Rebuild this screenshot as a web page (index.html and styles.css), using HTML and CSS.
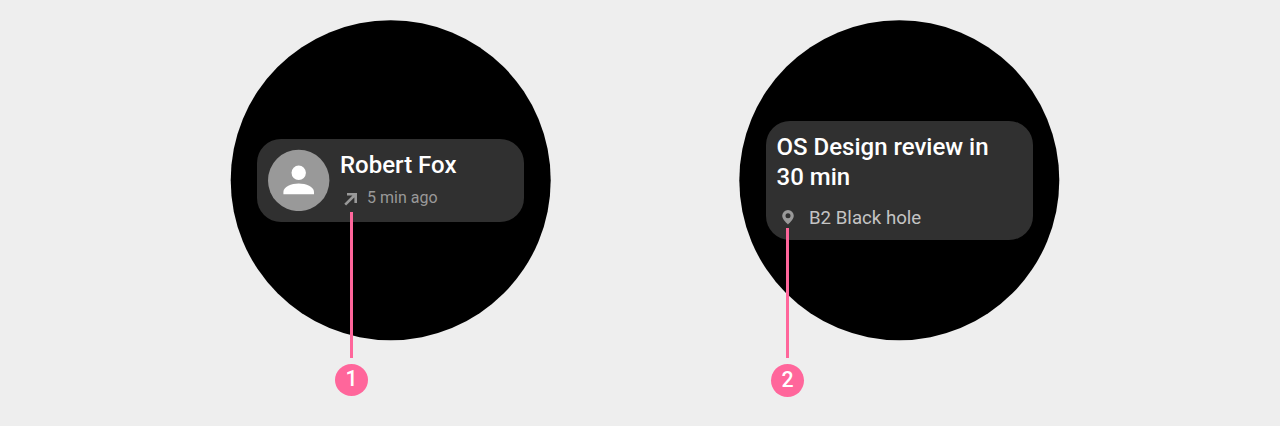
FILE: index.html
```html
<!DOCTYPE html>
<html lang="en">
<head>
<meta charset="utf-8">
<title>Watch cards</title>
<link rel="stylesheet" href="styles.css">
</head>
<body>
<main class="stage">
  <section class="watch">
    <svg class="disc" viewBox="0 0 322 322"><circle cx="160.700" cy="161.200" r="160"/></svg>
    <article class="card contact">
      <svg class="avatar" viewBox="0 0 62 62"><circle cx="30.700" cy="31.400" r="30.700" fill="#999"/><circle cx="30.700" cy="23.800" r="7.200" fill="#fff"/><path d="M15.400 45.200v-2.200c0-5.300 8-8.500 15.300-8.500s15.300 3.200 15.300 8.500v2.200z" fill="#fff"/></svg>
      <div class="info">
        <h2 class="name">Robert Fox</h2>
        <p class="meta"><svg class="arrow" viewBox="0 0 14 14"><path d="M3 2.200H11.700V11M11.400 2.500L1.200 12.700" fill="none" stroke="#999" stroke-width="2.600"/></svg><span>5 min ago</span></p>
      </div>
    </article>
    <div class="callout callout-one"><span class="line"></span><span class="number">1</span></div>
  </section>
  <section class="watch">
    <svg class="disc" viewBox="0 0 322 322"><circle cx="161.300" cy="161.200" r="160"/></svg>
    <article class="card event">
      <h2 class="title">OS Design review in<br>30 min</h2>
      <p class="place"><svg class="pin" viewBox="0 0 12 15"><path fill-rule="evenodd" d="M6 0a5.800 5.800 0 0 0-5.800 5.800C.2 9.500 6 14.500 6 14.500s5.800-5 5.800-8.700A5.800 5.800 0 0 0 6 0zm0 3.300a2.500 2.500 0 1 1 0 5 2.500 2.500 0 0 1 0-5z" fill="#999"/></svg><span>B2 Black hole</span></p>
    </article>
    <div class="callout callout-two"><span class="line"></span><span class="number">2</span></div>
  </section>
</main>
</body>
</html>
```
FILE: styles.css
```css
* { box-sizing: border-box; }
body { margin: 0; background: #eee; font-family: Roboto, sans-serif; }
h2, p { margin: 0; font-weight: 500; }
.stage { display: flex; gap: 188px; height: 426px; padding: 20px 0 0 231px; }
.watch { position: relative; width: 320px; height: 320px; flex: none; padding-left: 26px; }
.disc { position: absolute; left: -1px; top: -1px; width: 322px; height: 322px; fill: #000; }
.card { position: relative; width: 267px; border-radius: 24px; background: #303030; color: #fff; }
.contact { height: 82.500px; margin-top: 119px; display: flex; align-items: flex-start; padding: 10px 11px; gap: 10px; }
.avatar { width: 62px; height: 62px; flex: none; }
.info { padding-top: 1px; }
.name, .title { font-size: 24px; line-height: 30px; white-space: nowrap; }
.title { margin-left: -0.500px; }
.meta { display: flex; align-items: center; margin-top: 8px; font-size: 16px; line-height: 20px; font-weight: 400; color: #999; gap: 9px; }
.arrow { width: 14px; height: 14px; margin: 1px 0 0 4px; }
.event { height: 118.500px; margin: 101px 0 0 1px; padding: 11px; }
.place { display: flex; align-items: center; margin-top: 14px; padding-left: 4.500px; gap: 15.500px; font-size: 18.670px; line-height: 24px; font-weight: 400; color: #c4c4c4; }
.pin { width: 12px; height: 15px; margin: 0 0 1px; }
.callout { position: absolute; display: flex; flex-direction: column; align-items: center; width: 33px; gap: 6px; }
.callout-one { left: 104px; top: 192px; }
.callout-two { left: 32px; top: 208px; }
.line { width: 3px; background: #ff669b; }
.callout-one .line { height: 146px; }
.callout-two .line { height: 130px; }
.number { width: 33px; height: 32px; border-radius: 50%; background: #ff669b; color: #fff; font-size: 21.300px; font-weight: 500; line-height: 30px; text-align: center; }
.callout-two .number { height: 33px; line-height: 32px; }
```
